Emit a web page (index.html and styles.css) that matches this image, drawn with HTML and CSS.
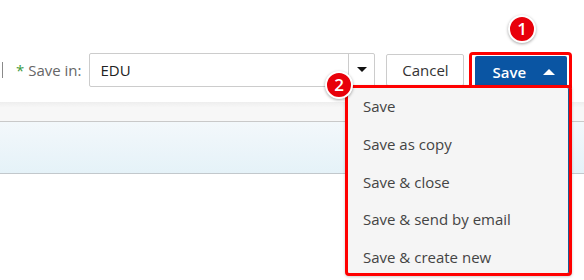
FILE: index.html
```html
<!DOCTYPE html>
<html lang="en">
<head>
    <meta charset="UTF-8">
    <title>Save options</title>
    <link rel="stylesheet" href="styles.css">
</head>
<body>
    <div class="page">
        <div class="toolbar">
            <span class="divider"></span>
            <label class="field-label"><span class="required">*</span> Save in:</label>
            <div class="select">
                <span class="select-value">EDU</span>
                <span class="select-arrow"></span>
            </div>
            <button class="btn btn-cancel">Cancel</button>
            <div class="highlight">
                <button class="btn btn-save">Save <span class="caret-up"></span></button>
            </div>
        </div>

        <div class="band-gray"></div>
        <div class="band-blue"></div>

        <span class="badge badge-one">1</span>
        <span class="badge badge-two">2</span>

        <ul class="save-menu">
            <li>Save</li>
            <li>Save as copy</li>
            <li>Save &amp; close</li>
            <li>Save &amp; send by email</li>
            <li>Save &amp; create new</li>
        </ul>
    </div>
</body>
</html>
```

FILE: styles.css
```css
* {
    margin: 0;
    padding: 0;
    box-sizing: border-box;
}

body {
    font-family: "Open Sans", "Noto Sans", sans-serif;
    background: #fff;
    width: 584px;
    height: 280px;
    overflow: hidden;
}

.page {
    position: relative;
    height: 280px;
}

.toolbar {
    height: 102px;
    display: flex;
    align-items: center;
    padding: 53px 0 15px 2px;
}

.divider {
    width: 1px;
    height: 16px;
    background: #8a8a8a;
    margin-right: 13px;
}

.field-label {
    font-size: 15px;
    color: #666;
    margin-right: 8px;
}

.required {
    color: #3c9a3c;
}

.select {
    display: flex;
    width: 286px;
    height: 34px;
    border: 1px solid #ccc;
    border-radius: 2px;
}

.select-value {
    flex: 1;
    font-size: 15px;
    color: #222;
    padding: 6px 0 0 10px;
    border-right: 1px solid #ccc;
}

.select-arrow {
    width: 25px;
    position: relative;
}

.select-arrow::after {
    content: "";
    position: absolute;
    left: 8px;
    top: 13px;
    border-left: 5px solid transparent;
    border-right: 5px solid transparent;
    border-top: 5px solid #111;
}

.btn {
    font-family: inherit;
    font-size: 15px;
    height: 32px;
    border-radius: 2px;
    cursor: pointer;
}

.btn-cancel {
    width: 78px;
    margin-left: 11px;
    background: #fff;
    color: #333;
    border: 1px solid #ccc;
}

.highlight {
    margin-left: 5px;
    padding: 1px 2px 0 3px;
    border: 3px solid #f00;
    border-bottom: none;
    border-radius: 4px 4px 0 0;
}

.btn-save {
    width: 92px;
    height: 32px;
    background: #0a55a3;
    color: #fff;
    border: none;
    font-weight: 600;
    display: flex;
    align-items: center;
    padding-left: 17px;
}

.caret-up {
    margin-left: 17px;
    border-left: 6px solid transparent;
    border-right: 6px solid transparent;
    border-bottom: 6px solid #fff;
}

.band-gray {
    height: 20px;
    background: linear-gradient(#eeeeee, #f7f7f7 30%, #f7f7f7);
    border-bottom: 1px solid #c9c9c9;
}

.band-blue {
    height: 52px;
    background: linear-gradient(#f3f8fb, #e5f2f8);
    border-bottom: 1px solid #c2c8cc;
}

.badge {
    position: absolute;
    width: 28px;
    height: 28px;
    border-radius: 50%;
    background: #e8000a;
    border: 2px solid #fff;
    box-shadow: 0 1px 3px rgba(0, 0, 0, 0.35);
    color: #fff;
    font-size: 17px;
    font-weight: 600;
    text-align: center;
    line-height: 24px;
}

.badge-one {
    left: 508px;
    top: 15px;
}

.badge-two {
    left: 325px;
    top: 71px;
    z-index: 2;
}

.save-menu {
    position: absolute;
    left: 345px;
    top: 85px;
    width: 227px;
    height: 191px;
    list-style: none;
    background: #f5f5f5;
    border: 3px solid #f00;
    border-radius: 4px;
    box-shadow: inset -1px 0 #1f5b92, 0 1px 3px rgba(0, 0, 0, 0.2);
    z-index: 1;
}

.save-menu li {
    height: 37.8px;
    line-height: 37.8px;
    padding-left: 15px;
    font-size: 15px;
    color: #444;
}
```
